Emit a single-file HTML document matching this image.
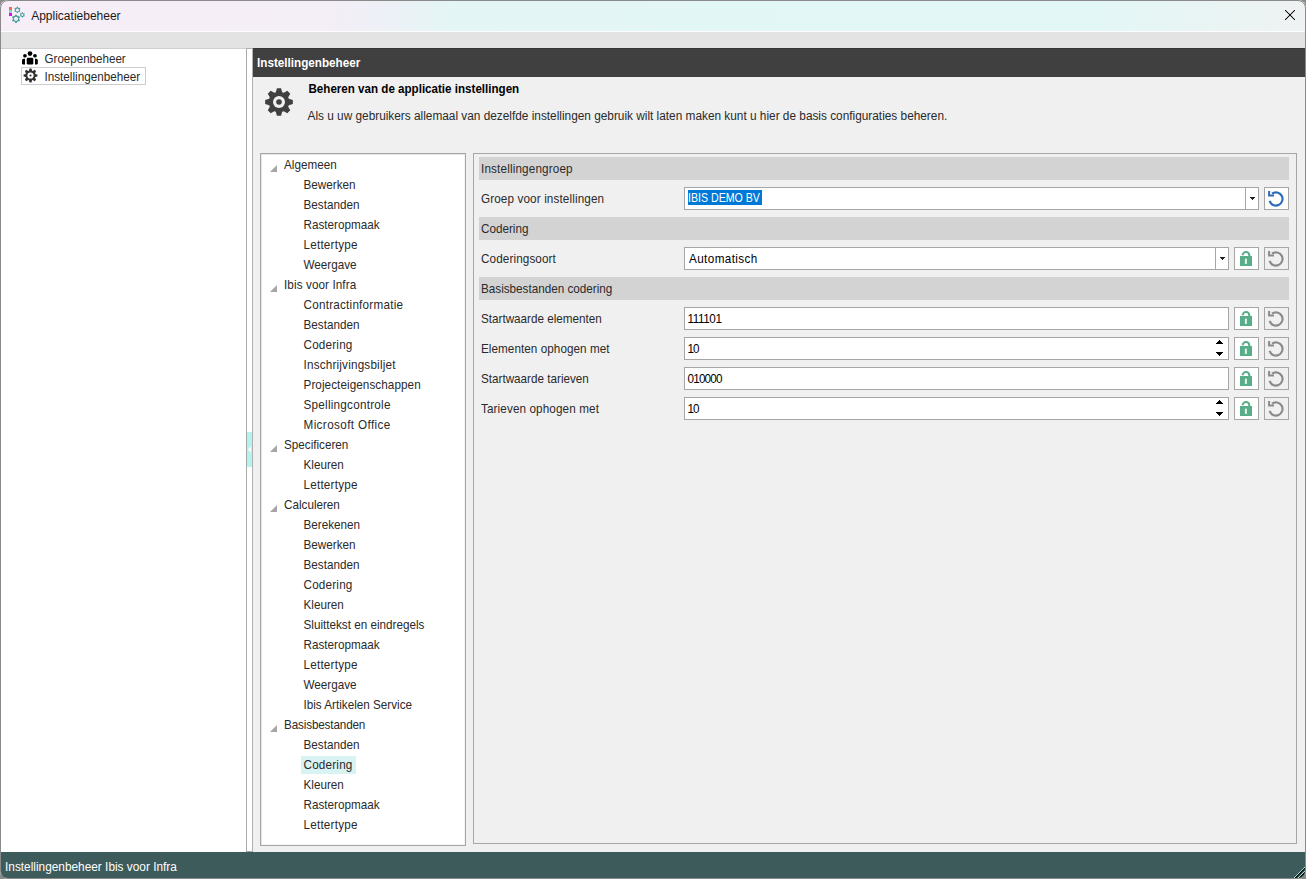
<!DOCTYPE html>
<html><head><meta charset="utf-8"><style>
html,body{margin:0;padding:0;width:1306px;height:879px;overflow:hidden;background:#8a8a8a;}
.win{position:absolute;left:0;top:0;width:1306px;height:879px;overflow:hidden;font-family:"Liberation Sans",sans-serif;}
.t{position:absolute;white-space:nowrap;line-height:16px;font-family:"Liberation Sans",sans-serif;transform-origin:0 12.5px;transform:scaleY(1.07)}
.tri{position:absolute;width:0;height:0;border-left:7px solid transparent;border-bottom:7px solid #a6a6a6;}
.box{position:absolute;background:#fff;border:1px solid #a6a6a6;}
.btn{position:absolute;width:23px;height:21px;border:1px solid #a6a6a6;}
</style></head><body>
<div class="win" style="border-radius:8px;background:#f0f0f0">
<div style="position:absolute;left:1px;top:1px;width:1304px;height:30px;background:linear-gradient(90deg,#f7eef7 0px,#f4eef6 330px,#eef0f7 375px,#e3f6f5 460px,#e2f7f6 1090px,#eff2f2 1304px);"></div>
<div style="position:absolute;left:1px;top:31px;width:1304px;height:1px;background:#fdfdfd;"></div>
<div style="position:absolute;left:1px;top:32px;width:1304px;height:16px;background:#e3e3e3;"></div>
<div style="position:absolute;left:1px;top:48px;width:245px;height:1px;background:#cfcfcf;"></div>
<div style="position:absolute;left:1px;top:49px;width:245px;height:803px;background:#fff;"></div>
<div style="position:absolute;left:246px;top:48px;width:1px;height:804px;background:#a8a8a8;"></div>
<div style="position:absolute;left:247px;top:48px;width:5px;height:804px;background:#fff;"></div>
<div style="position:absolute;left:247px;top:432px;width:5px;height:35px;background:#b4f3ee;"></div>
<div style="position:absolute;left:250px;top:447px;width:1px;height:5px;background:#fff;"></div>
<div style="position:absolute;left:249px;top:448px;width:1px;height:3px;background:#fff;"></div>
<div style="position:absolute;left:248px;top:449px;width:1px;height:1px;background:#fff;"></div>
<div style="position:absolute;left:252px;top:48px;width:1px;height:804px;background:#b0b0b0;"></div>
<div style="position:absolute;left:246px;top:48px;width:7px;height:1px;background:#b0b0b0;"></div>
<div style="position:absolute;left:253px;top:48px;width:1052px;height:1px;background:#353535;"></div>
<div style="position:absolute;left:253px;top:49px;width:1052px;height:28px;background:#404040;"></div>
<div style="position:absolute;left:253px;top:77px;width:1052px;height:775px;background:#f0f0f0;"></div>
<div style="position:absolute;left:260px;top:153px;width:206px;height:693px;background:#fff;box-sizing:border-box;border:1px solid #a6a6a6;box-shadow:inset 1px 1px 0 #e6e6e6,inset -1px -1px 0 #f4f4f4"></div>
<div style="position:absolute;left:473px;top:153px;width:824px;height:691px;background:#f0f0f0;box-sizing:border-box;border:1px solid #a6a6a6"></div>
<div style="position:absolute;left:246px;top:851px;width:7px;height:1px;background:#a8a8a8;"></div>
<div style="position:absolute;left:1px;top:852px;width:1304px;height:26px;background:#3e5b5b;"></div>
<div class="tri" style="left:270px;top:165px"></div>
<div class="t" style="left:284px;top:156.95px;font-size:11.7px;color:#2a2a2a;font-weight:normal;">Algemeen</div>
<div class="t" style="left:303.5px;top:176.95px;font-size:11.7px;color:#2a2a2a;font-weight:normal;">Bewerken</div>
<div class="t" style="left:303.5px;top:196.95px;font-size:11.7px;color:#2a2a2a;font-weight:normal;">Bestanden</div>
<div class="t" style="left:303.5px;top:216.95px;font-size:11.7px;color:#2a2a2a;font-weight:normal;">Rasteropmaak</div>
<div class="t" style="left:303.5px;top:236.95px;font-size:11.7px;color:#2a2a2a;font-weight:normal;letter-spacing:0.22px">Lettertype</div>
<div class="t" style="left:303.5px;top:256.95px;font-size:11.7px;color:#2a2a2a;font-weight:normal;">Weergave</div>
<div class="tri" style="left:270px;top:285px"></div>
<div class="t" style="left:284px;top:276.95px;font-size:11.7px;color:#2a2a2a;font-weight:normal;letter-spacing:0.1px">Ibis voor Infra</div>
<div class="t" style="left:303.5px;top:296.95px;font-size:11.7px;color:#2a2a2a;font-weight:normal;letter-spacing:0.235px">Contractinformatie</div>
<div class="t" style="left:303.5px;top:316.95px;font-size:11.7px;color:#2a2a2a;font-weight:normal;">Bestanden</div>
<div class="t" style="left:303.5px;top:336.95px;font-size:11.7px;color:#2a2a2a;font-weight:normal;letter-spacing:0.2px">Codering</div>
<div class="t" style="left:303.5px;top:356.95px;font-size:11.7px;color:#2a2a2a;font-weight:normal;letter-spacing:0.2px">Inschrijvingsbiljet</div>
<div class="t" style="left:303.5px;top:376.95px;font-size:11.7px;color:#2a2a2a;font-weight:normal;letter-spacing:0.08px">Projecteigenschappen</div>
<div class="t" style="left:303.5px;top:396.95px;font-size:11.7px;color:#2a2a2a;font-weight:normal;letter-spacing:0.25px">Spellingcontrole</div>
<div class="t" style="left:303.5px;top:416.95px;font-size:11.7px;color:#2a2a2a;font-weight:normal;letter-spacing:0.39px">Microsoft Office</div>
<div class="tri" style="left:270px;top:445px"></div>
<div class="t" style="left:284px;top:436.95px;font-size:11.7px;color:#2a2a2a;font-weight:normal;">Specificeren</div>
<div class="t" style="left:303.5px;top:456.95px;font-size:11.7px;color:#2a2a2a;font-weight:normal;">Kleuren</div>
<div class="t" style="left:303.5px;top:476.95px;font-size:11.7px;color:#2a2a2a;font-weight:normal;letter-spacing:0.22px">Lettertype</div>
<div class="tri" style="left:270px;top:505px"></div>
<div class="t" style="left:284px;top:496.95px;font-size:11.7px;color:#2a2a2a;font-weight:normal;">Calculeren</div>
<div class="t" style="left:303.5px;top:516.95px;font-size:11.7px;color:#2a2a2a;font-weight:normal;">Berekenen</div>
<div class="t" style="left:303.5px;top:536.95px;font-size:11.7px;color:#2a2a2a;font-weight:normal;">Bewerken</div>
<div class="t" style="left:303.5px;top:556.95px;font-size:11.7px;color:#2a2a2a;font-weight:normal;">Bestanden</div>
<div class="t" style="left:303.5px;top:576.95px;font-size:11.7px;color:#2a2a2a;font-weight:normal;letter-spacing:0.2px">Codering</div>
<div class="t" style="left:303.5px;top:596.95px;font-size:11.7px;color:#2a2a2a;font-weight:normal;">Kleuren</div>
<div class="t" style="left:303.5px;top:616.95px;font-size:11.7px;color:#2a2a2a;font-weight:normal;">Sluittekst en eindregels</div>
<div class="t" style="left:303.5px;top:636.95px;font-size:11.7px;color:#2a2a2a;font-weight:normal;">Rasteropmaak</div>
<div class="t" style="left:303.5px;top:656.95px;font-size:11.7px;color:#2a2a2a;font-weight:normal;letter-spacing:0.22px">Lettertype</div>
<div class="t" style="left:303.5px;top:676.95px;font-size:11.7px;color:#2a2a2a;font-weight:normal;">Weergave</div>
<div class="t" style="left:303.5px;top:696.95px;font-size:11.7px;color:#2a2a2a;font-weight:normal;">Ibis Artikelen Service</div>
<div class="tri" style="left:270px;top:725px"></div>
<div class="t" style="left:284px;top:716.95px;font-size:11.7px;color:#2a2a2a;font-weight:normal;letter-spacing:-0.14px">Basisbestanden</div>
<div class="t" style="left:303.5px;top:736.95px;font-size:11.7px;color:#2a2a2a;font-weight:normal;">Bestanden</div>
<div style="position:absolute;left:301px;top:756px;width:55px;height:18px;background:#d9f3f3;"></div>
<div class="t" style="left:303.5px;top:756.95px;font-size:11.7px;color:#2a2a2a;font-weight:normal;letter-spacing:0.2px">Codering</div>
<div class="t" style="left:303.5px;top:776.95px;font-size:11.7px;color:#2a2a2a;font-weight:normal;">Kleuren</div>
<div class="t" style="left:303.5px;top:796.95px;font-size:11.7px;color:#2a2a2a;font-weight:normal;">Rasteropmaak</div>
<div class="t" style="left:303.5px;top:816.95px;font-size:11.7px;color:#2a2a2a;font-weight:normal;letter-spacing:0.22px">Lettertype</div>
<div style="position:absolute;left:479px;top:157px;width:810px;height:23px;background:#d3d3d3;"></div>
<div class="t" style="left:481px;top:160.95px;font-size:11.7px;color:#2a2a2a;font-weight:normal;letter-spacing:0.16px">Instellingengroep</div>
<div style="position:absolute;left:479px;top:217px;width:810px;height:23px;background:#d3d3d3;"></div>
<div class="t" style="left:481px;top:220.95px;font-size:11.7px;color:#2a2a2a;font-weight:normal;">Codering</div>
<div style="position:absolute;left:479px;top:277px;width:810px;height:23px;background:#d3d3d3;"></div>
<div class="t" style="left:481px;top:280.95px;font-size:11.7px;color:#2a2a2a;font-weight:normal;">Basisbestanden codering</div>
<div class="t" style="left:481px;top:190.95px;font-size:11.7px;color:#2a2a2a;font-weight:normal;letter-spacing:0.13px">Groep voor instellingen</div>
<div class="t" style="left:481px;top:250.95px;font-size:11.7px;color:#2a2a2a;font-weight:normal;letter-spacing:0.12px">Coderingsoort</div>
<div class="t" style="left:481px;top:310.95px;font-size:11.7px;color:#2a2a2a;font-weight:normal;">Startwaarde elementen</div>
<div class="t" style="left:481px;top:340.95px;font-size:11.7px;color:#2a2a2a;font-weight:normal;letter-spacing:0.06px">Elementen ophogen met</div>
<div class="t" style="left:481px;top:370.95px;font-size:11.7px;color:#2a2a2a;font-weight:normal;">Startwaarde tarieven</div>
<div class="t" style="left:481px;top:400.95px;font-size:11.7px;color:#2a2a2a;font-weight:normal;letter-spacing:0.12px">Tarieven ophogen met</div>
<div class="box" style="left:684px;top:187px;width:573px;height:21px"></div>
<div style="position:absolute;left:1245px;top:187px;width:1px;height:23px;background:#a6a6a6;"></div>
<div style="position:absolute;left:1250px;top:197px;width:5px;height:1px;background:#222;"></div><div style="position:absolute;left:1251px;top:198px;width:3px;height:1px;background:#222;"></div><div style="position:absolute;left:1252px;top:199px;width:1px;height:1px;background:#222;"></div>
<div style="position:absolute;left:688px;top:190px;width:74px;height:15px;background:#0078d7;"></div>
<div class="t" style="left:688.2px;top:189.95px;font-size:11.7px;color:#fff;font-weight:normal;transform:scale(0.907,1.07);transform-origin:0 12.5px">IBIS DEMO BV</div>
<div class="btn" style="left:1264px;top:187px;background:#fff"><svg width="23" height="21" viewBox="0 0 23 21" style="position:absolute;left:0;top:0"><path d="M4.6 12.9 A6.6 6.6 0 1 0 7.0 5.6" fill="none" stroke="#2a6bb8" stroke-width="2.15"/><path d="M3.1 2.9 H5.1 V6.6 H9 V8.5 H3.1 Z" fill="#2a6bb8"/></svg></div>
<div class="box" style="left:684px;top:247px;width:543px;height:21px"></div>
<div style="position:absolute;left:1215px;top:247px;width:1px;height:23px;background:#a6a6a6;"></div>
<div style="position:absolute;left:1220px;top:257px;width:5px;height:1px;background:#222;"></div><div style="position:absolute;left:1221px;top:258px;width:3px;height:1px;background:#222;"></div><div style="position:absolute;left:1222px;top:259px;width:1px;height:1px;background:#222;"></div>
<div class="t" style="left:689px;top:250.95px;font-size:11.7px;color:#000;font-weight:normal;letter-spacing:0.4px">Automatisch</div>
<div class="btn" style="left:1234px;top:247px;background:#fff"><svg width="23" height="21" viewBox="0 0 23 21" style="position:absolute;left:0;top:0"><path d="M7.7 7.2 A3.3 3.3 0 0 1 14.3 7.3 V8.5" fill="none" stroke="#58ae89" stroke-width="2.1"/><rect x="5" y="8" width="12" height="10" fill="#58ae89"/><rect x="9.9" y="10.7" width="2" height="5.2" fill="#e4f2eb"/></svg></div>
<div class="btn" style="left:1264px;top:247px;background:#f0f0f0"><svg width="23" height="21" viewBox="0 0 23 21" style="position:absolute;left:0;top:0"><path d="M4.6 12.9 A6.6 6.6 0 1 0 7.0 5.6" fill="none" stroke="#8a8a8a" stroke-width="2.15"/><path d="M3.1 2.9 H5.1 V6.6 H9 V8.5 H3.1 Z" fill="#8a8a8a"/></svg></div>
<div class="box" style="left:684px;top:307px;width:543px;height:21px"></div>
<div class="t" style="left:687.5px;top:310.95px;font-size:11.7px;color:#000;font-weight:normal;letter-spacing:-0.4px">111101</div>
<div class="btn" style="left:1234px;top:307px;background:#fff"><svg width="23" height="21" viewBox="0 0 23 21" style="position:absolute;left:0;top:0"><path d="M7.7 7.2 A3.3 3.3 0 0 1 14.3 7.3 V8.5" fill="none" stroke="#58ae89" stroke-width="2.1"/><rect x="5" y="8" width="12" height="10" fill="#58ae89"/><rect x="9.9" y="10.7" width="2" height="5.2" fill="#e4f2eb"/></svg></div>
<div class="btn" style="left:1264px;top:307px;background:#f0f0f0"><svg width="23" height="21" viewBox="0 0 23 21" style="position:absolute;left:0;top:0"><path d="M4.6 12.9 A6.6 6.6 0 1 0 7.0 5.6" fill="none" stroke="#8a8a8a" stroke-width="2.15"/><path d="M3.1 2.9 H5.1 V6.6 H9 V8.5 H3.1 Z" fill="#8a8a8a"/></svg></div>
<div class="box" style="left:684px;top:337px;width:543px;height:21px"></div>
<div class="t" style="left:687.5px;top:340.95px;font-size:11.7px;color:#000;font-weight:normal;letter-spacing:-1px">10</div>
<div style="position:absolute;left:1219px;top:340px;width:1px;height:1px;background:#000;"></div><div style="position:absolute;left:1218px;top:341px;width:3px;height:1px;background:#000;"></div><div style="position:absolute;left:1217px;top:342px;width:5px;height:1px;background:#000;"></div><div style="position:absolute;left:1216px;top:343px;width:7px;height:1px;background:#000;"></div>
<div style="position:absolute;left:1216px;top:352px;width:7px;height:1px;background:#000;"></div><div style="position:absolute;left:1217px;top:353px;width:5px;height:1px;background:#000;"></div><div style="position:absolute;left:1218px;top:354px;width:3px;height:1px;background:#000;"></div><div style="position:absolute;left:1219px;top:355px;width:1px;height:1px;background:#000;"></div>
<div class="btn" style="left:1234px;top:337px;background:#fff"><svg width="23" height="21" viewBox="0 0 23 21" style="position:absolute;left:0;top:0"><path d="M7.7 7.2 A3.3 3.3 0 0 1 14.3 7.3 V8.5" fill="none" stroke="#58ae89" stroke-width="2.1"/><rect x="5" y="8" width="12" height="10" fill="#58ae89"/><rect x="9.9" y="10.7" width="2" height="5.2" fill="#e4f2eb"/></svg></div>
<div class="btn" style="left:1264px;top:337px;background:#f0f0f0"><svg width="23" height="21" viewBox="0 0 23 21" style="position:absolute;left:0;top:0"><path d="M4.6 12.9 A6.6 6.6 0 1 0 7.0 5.6" fill="none" stroke="#8a8a8a" stroke-width="2.15"/><path d="M3.1 2.9 H5.1 V6.6 H9 V8.5 H3.1 Z" fill="#8a8a8a"/></svg></div>
<div class="box" style="left:684px;top:367px;width:543px;height:21px"></div>
<div class="t" style="left:687.5px;top:370.95px;font-size:11.7px;color:#000;font-weight:normal;letter-spacing:-0.8px">010000</div>
<div class="btn" style="left:1234px;top:367px;background:#fff"><svg width="23" height="21" viewBox="0 0 23 21" style="position:absolute;left:0;top:0"><path d="M7.7 7.2 A3.3 3.3 0 0 1 14.3 7.3 V8.5" fill="none" stroke="#58ae89" stroke-width="2.1"/><rect x="5" y="8" width="12" height="10" fill="#58ae89"/><rect x="9.9" y="10.7" width="2" height="5.2" fill="#e4f2eb"/></svg></div>
<div class="btn" style="left:1264px;top:367px;background:#f0f0f0"><svg width="23" height="21" viewBox="0 0 23 21" style="position:absolute;left:0;top:0"><path d="M4.6 12.9 A6.6 6.6 0 1 0 7.0 5.6" fill="none" stroke="#8a8a8a" stroke-width="2.15"/><path d="M3.1 2.9 H5.1 V6.6 H9 V8.5 H3.1 Z" fill="#8a8a8a"/></svg></div>
<div class="box" style="left:684px;top:397px;width:543px;height:21px"></div>
<div class="t" style="left:687.5px;top:400.95px;font-size:11.7px;color:#000;font-weight:normal;letter-spacing:-1px">10</div>
<div style="position:absolute;left:1219px;top:400px;width:1px;height:1px;background:#000;"></div><div style="position:absolute;left:1218px;top:401px;width:3px;height:1px;background:#000;"></div><div style="position:absolute;left:1217px;top:402px;width:5px;height:1px;background:#000;"></div><div style="position:absolute;left:1216px;top:403px;width:7px;height:1px;background:#000;"></div>
<div style="position:absolute;left:1216px;top:412px;width:7px;height:1px;background:#000;"></div><div style="position:absolute;left:1217px;top:413px;width:5px;height:1px;background:#000;"></div><div style="position:absolute;left:1218px;top:414px;width:3px;height:1px;background:#000;"></div><div style="position:absolute;left:1219px;top:415px;width:1px;height:1px;background:#000;"></div>
<div class="btn" style="left:1234px;top:397px;background:#fff"><svg width="23" height="21" viewBox="0 0 23 21" style="position:absolute;left:0;top:0"><path d="M7.7 7.2 A3.3 3.3 0 0 1 14.3 7.3 V8.5" fill="none" stroke="#58ae89" stroke-width="2.1"/><rect x="5" y="8" width="12" height="10" fill="#58ae89"/><rect x="9.9" y="10.7" width="2" height="5.2" fill="#e4f2eb"/></svg></div>
<div class="btn" style="left:1264px;top:397px;background:#f0f0f0"><svg width="23" height="21" viewBox="0 0 23 21" style="position:absolute;left:0;top:0"><path d="M4.6 12.9 A6.6 6.6 0 1 0 7.0 5.6" fill="none" stroke="#8a8a8a" stroke-width="2.15"/><path d="M3.1 2.9 H5.1 V6.6 H9 V8.5 H3.1 Z" fill="#8a8a8a"/></svg></div>
<div class="t" style="left:257px;top:54.95px;font-size:11.7px;color:#fff;font-weight:bold;">Instellingenbeheer</div>
<div class="t" style="left:308.5px;top:80.98px;font-size:11.6px;color:#000;font-weight:bold;">Beheren van de applicatie instellingen</div>
<div class="t" style="left:307.5px;top:107.90px;font-size:11.84px;color:#2a2a2a;font-weight:normal;">Als u uw gebruikers allemaal van dezelfde instellingen gebruik wilt laten maken kunt u hier de basis configuraties beheren.</div>
<svg style="position:absolute;left:265px;top:88px" width="28" height="28" viewBox="0 0 28 28"><path d="M10.82 4.20 L11.92 0.16 L16.08 0.16 L17.18 4.20 L18.68 4.82 L22.32 2.74 L25.26 5.68 L23.18 9.32 L23.80 10.82 L27.84 11.92 L27.84 16.08 L23.80 17.18 L23.18 18.68 L25.26 22.32 L22.32 25.26 L18.68 23.18 L17.18 23.80 L16.08 27.84 L11.92 27.84 L10.82 23.80 L9.32 23.18 L5.68 25.26 L2.74 22.32 L4.82 18.68 L4.20 17.18 L0.16 16.08 L0.16 11.92 L4.20 10.82 L4.82 9.32 L2.74 5.68 L5.68 2.74 L9.32 4.82Z" fill="#404040"/><circle cx="14" cy="14" r="6" fill="#f0f0f0"/><circle cx="14" cy="14" r="2.8" fill="#404040"/></svg>
<div style="position:absolute;left:21px;top:67px;width:125px;height:18px;background:transparent;box-sizing:border-box;border:1px solid #cdcdcd"></div>
<svg style="position:absolute;left:22.5px;top:68.4px" width="15" height="15" viewBox="0 0 15 15"><path d="M5.92 2.65 L6.46 0.58 L8.54 0.58 L9.08 2.65 L9.82 2.96 L11.66 1.87 L13.13 3.34 L12.04 5.18 L12.35 5.92 L14.42 6.46 L14.42 8.54 L12.35 9.08 L12.04 9.82 L13.13 11.66 L11.66 13.13 L9.82 12.04 L9.08 12.35 L8.54 14.42 L6.46 14.42 L5.92 12.35 L5.18 12.04 L3.34 13.13 L1.87 11.66 L2.96 9.82 L2.65 9.08 L0.58 8.54 L0.58 6.46 L2.65 5.92 L2.96 5.18 L1.87 3.34 L3.34 1.87 L5.18 2.96Z" fill="#333"/><circle cx="7.5" cy="7.5" r="3.1" fill="#fff"/><circle cx="7.5" cy="7.5" r="1.1" fill="#333"/></svg>
<svg style="position:absolute;left:22px;top:51px" width="16" height="14" viewBox="0 0 16 14"><circle cx="8" cy="2.6" r="2.35" fill="#000"/><circle cx="2.95" cy="4.75" r="1.85" fill="#000"/><circle cx="12.95" cy="4.75" r="1.85" fill="#000"/><rect x="4.75" y="6.8" width="6.55" height="6.8" rx="1.4" fill="#000"/><path d="M3 7.8 V13.6 H1.4 Q0 13.6 0 12.2 V9.3 Q0 7.8 1.5 7.8 Z" fill="#000"/><path d="M13 7.8 V13.6 H14.4 Q15.8 13.6 15.8 12.2 V9.3 Q15.8 7.8 14.3 7.8 Z" fill="#000"/></svg>
<div class="t" style="left:44.5px;top:50.58px;font-size:11.6px;color:#2a2a2a;font-weight:normal;">Groepenbeheer</div>
<div class="t" style="left:44.5px;top:68.75px;font-size:11.7px;color:#2a2a2a;font-weight:normal;">Instellingenbeheer</div>
<div class="t" style="left:5px;top:859.39px;font-size:11.85px;color:#fff;font-weight:normal;">Instellingenbeheer Ibis voor Infra</div>
<div class="t" style="left:31.2px;top:8.44px;font-size:12px;color:#1a1a1a;font-weight:normal;">Applicatiebeheer</div>
<div style="position:absolute;left:9px;top:7px;width:3px;height:3px;background:#ee6c58;"></div>
<div style="position:absolute;left:9px;top:10px;width:3px;height:3px;background:#7ad8cc;"></div>
<div style="position:absolute;left:9px;top:13px;width:3px;height:3px;background:#de10e8;"></div>
<svg style="position:absolute;left:0;top:0" width="30" height="30" viewBox="0 0 30 30"><path d="M16.52 7.67 L16.83 6.75 L17.97 6.75 L18.28 7.67 L18.89 8.02 L19.84 7.83 L20.41 8.82 L19.77 9.55 L19.77 10.25 L20.41 10.98 L19.84 11.97 L18.89 11.78 L18.28 12.13 L17.97 13.05 L16.83 13.05 L16.52 12.13 L15.91 11.78 L14.96 11.97 L14.39 10.98 L15.03 10.25 L15.03 9.55 L14.39 8.82 L14.96 7.83 L15.91 8.02Z" fill="#4a9e9c"/><circle cx="17.4" cy="9.9" r="1.5" fill="#f3eef6"/><path d="M21.63 13.04 L21.89 12.29 L22.81 12.29 L23.07 13.04 L23.56 13.32 L24.34 13.17 L24.80 13.97 L24.28 14.57 L24.28 15.13 L24.80 15.73 L24.34 16.53 L23.56 16.38 L23.07 16.66 L22.81 17.41 L21.89 17.41 L21.63 16.66 L21.14 16.38 L20.36 16.53 L19.90 15.73 L20.42 15.13 L20.42 14.57 L19.90 13.97 L20.36 13.17 L21.14 13.32Z" fill="#4a9e9c"/><circle cx="22.35" cy="14.85" r="1.1" fill="#f3eef6"/><path d="M14.82 15.82 L15.26 14.67 L16.74 14.67 L17.18 15.82 L17.99 16.29 L19.21 16.09 L19.95 17.38 L19.17 18.33 L19.17 19.27 L19.95 20.22 L19.21 21.51 L17.99 21.31 L17.18 21.78 L16.74 22.93 L15.26 22.93 L14.82 21.78 L14.01 21.31 L12.79 21.51 L12.05 20.22 L12.83 19.27 L12.83 18.33 L12.05 17.38 L12.79 16.09 L14.01 16.29Z" fill="#4a9e9c"/><circle cx="16" cy="18.8" r="2.1" fill="#f3eef6"/></svg>
<div style="position:absolute;left:1286px;top:10px;width:1px;height:1px;background:#c4c6c6;"></div><div style="position:absolute;left:1285px;top:11px;width:1px;height:1px;background:#c4c6c6;"></div><div style="position:absolute;left:1293px;top:10px;width:1px;height:1px;background:#c4c6c6;"></div><div style="position:absolute;left:1294px;top:11px;width:1px;height:1px;background:#c4c6c6;"></div><div style="position:absolute;left:1287px;top:11px;width:1px;height:1px;background:#c4c6c6;"></div><div style="position:absolute;left:1286px;top:12px;width:1px;height:1px;background:#c4c6c6;"></div><div style="position:absolute;left:1292px;top:11px;width:1px;height:1px;background:#c4c6c6;"></div><div style="position:absolute;left:1293px;top:12px;width:1px;height:1px;background:#c4c6c6;"></div><div style="position:absolute;left:1288px;top:12px;width:1px;height:1px;background:#c4c6c6;"></div><div style="position:absolute;left:1287px;top:13px;width:1px;height:1px;background:#c4c6c6;"></div><div style="position:absolute;left:1291px;top:12px;width:1px;height:1px;background:#c4c6c6;"></div><div style="position:absolute;left:1292px;top:13px;width:1px;height:1px;background:#c4c6c6;"></div><div style="position:absolute;left:1289px;top:13px;width:1px;height:1px;background:#c4c6c6;"></div><div style="position:absolute;left:1288px;top:14px;width:1px;height:1px;background:#c4c6c6;"></div><div style="position:absolute;left:1290px;top:13px;width:1px;height:1px;background:#c4c6c6;"></div><div style="position:absolute;left:1291px;top:14px;width:1px;height:1px;background:#c4c6c6;"></div><div style="position:absolute;left:1290px;top:14px;width:1px;height:1px;background:#c4c6c6;"></div><div style="position:absolute;left:1289px;top:15px;width:1px;height:1px;background:#c4c6c6;"></div><div style="position:absolute;left:1289px;top:14px;width:1px;height:1px;background:#c4c6c6;"></div><div style="position:absolute;left:1290px;top:15px;width:1px;height:1px;background:#c4c6c6;"></div><div style="position:absolute;left:1291px;top:15px;width:1px;height:1px;background:#c4c6c6;"></div><div style="position:absolute;left:1290px;top:16px;width:1px;height:1px;background:#c4c6c6;"></div><div style="position:absolute;left:1288px;top:15px;width:1px;height:1px;background:#c4c6c6;"></div><div style="position:absolute;left:1289px;top:16px;width:1px;height:1px;background:#c4c6c6;"></div><div style="position:absolute;left:1292px;top:16px;width:1px;height:1px;background:#c4c6c6;"></div><div style="position:absolute;left:1291px;top:17px;width:1px;height:1px;background:#c4c6c6;"></div><div style="position:absolute;left:1287px;top:16px;width:1px;height:1px;background:#c4c6c6;"></div><div style="position:absolute;left:1288px;top:17px;width:1px;height:1px;background:#c4c6c6;"></div><div style="position:absolute;left:1293px;top:17px;width:1px;height:1px;background:#c4c6c6;"></div><div style="position:absolute;left:1292px;top:18px;width:1px;height:1px;background:#c4c6c6;"></div><div style="position:absolute;left:1286px;top:17px;width:1px;height:1px;background:#c4c6c6;"></div><div style="position:absolute;left:1287px;top:18px;width:1px;height:1px;background:#c4c6c6;"></div><div style="position:absolute;left:1294px;top:18px;width:1px;height:1px;background:#c4c6c6;"></div><div style="position:absolute;left:1293px;top:19px;width:1px;height:1px;background:#c4c6c6;"></div><div style="position:absolute;left:1285px;top:18px;width:1px;height:1px;background:#c4c6c6;"></div><div style="position:absolute;left:1286px;top:19px;width:1px;height:1px;background:#c4c6c6;"></div><div style="position:absolute;left:1285px;top:10px;width:1px;height:1px;background:#111;"></div><div style="position:absolute;left:1294px;top:10px;width:1px;height:1px;background:#111;"></div><div style="position:absolute;left:1286px;top:11px;width:1px;height:1px;background:#111;"></div><div style="position:absolute;left:1293px;top:11px;width:1px;height:1px;background:#111;"></div><div style="position:absolute;left:1287px;top:12px;width:1px;height:1px;background:#111;"></div><div style="position:absolute;left:1292px;top:12px;width:1px;height:1px;background:#111;"></div><div style="position:absolute;left:1288px;top:13px;width:1px;height:1px;background:#111;"></div><div style="position:absolute;left:1291px;top:13px;width:1px;height:1px;background:#111;"></div><div style="position:absolute;left:1289px;top:14px;width:1px;height:1px;background:#111;"></div><div style="position:absolute;left:1290px;top:14px;width:1px;height:1px;background:#111;"></div><div style="position:absolute;left:1290px;top:15px;width:1px;height:1px;background:#111;"></div><div style="position:absolute;left:1289px;top:15px;width:1px;height:1px;background:#111;"></div><div style="position:absolute;left:1291px;top:16px;width:1px;height:1px;background:#111;"></div><div style="position:absolute;left:1288px;top:16px;width:1px;height:1px;background:#111;"></div><div style="position:absolute;left:1292px;top:17px;width:1px;height:1px;background:#111;"></div><div style="position:absolute;left:1287px;top:17px;width:1px;height:1px;background:#111;"></div><div style="position:absolute;left:1293px;top:18px;width:1px;height:1px;background:#111;"></div><div style="position:absolute;left:1286px;top:18px;width:1px;height:1px;background:#111;"></div><div style="position:absolute;left:1294px;top:19px;width:1px;height:1px;background:#111;"></div><div style="position:absolute;left:1285px;top:19px;width:1px;height:1px;background:#111;"></div>
<div style="position:absolute;left:1294px;top:877px;width:1px;height:1px;background:#a6e0dc;"></div><div style="position:absolute;left:1295px;top:876px;width:1px;height:1px;background:#a6e0dc;"></div><div style="position:absolute;left:1296px;top:875px;width:1px;height:1px;background:#a6e0dc;"></div><div style="position:absolute;left:1297px;top:874px;width:1px;height:1px;background:#a6e0dc;"></div><div style="position:absolute;left:1298px;top:873px;width:1px;height:1px;background:#a6e0dc;"></div><div style="position:absolute;left:1299px;top:872px;width:1px;height:1px;background:#a6e0dc;"></div><div style="position:absolute;left:1300px;top:871px;width:1px;height:1px;background:#a6e0dc;"></div><div style="position:absolute;left:1301px;top:870px;width:1px;height:1px;background:#a6e0dc;"></div><div style="position:absolute;left:1302px;top:869px;width:1px;height:1px;background:#a6e0dc;"></div><div style="position:absolute;left:1303px;top:868px;width:1px;height:1px;background:#a6e0dc;"></div><div style="position:absolute;left:1304px;top:867px;width:1px;height:1px;background:#a6e0dc;"></div><div style="position:absolute;left:1295px;top:877px;width:1px;height:1px;background:#0a0a0a;"></div><div style="position:absolute;left:1296px;top:876px;width:1px;height:1px;background:#0a0a0a;"></div><div style="position:absolute;left:1297px;top:875px;width:1px;height:1px;background:#0a0a0a;"></div><div style="position:absolute;left:1298px;top:874px;width:1px;height:1px;background:#0a0a0a;"></div><div style="position:absolute;left:1299px;top:873px;width:1px;height:1px;background:#0a0a0a;"></div><div style="position:absolute;left:1300px;top:872px;width:1px;height:1px;background:#0a0a0a;"></div><div style="position:absolute;left:1301px;top:871px;width:1px;height:1px;background:#0a0a0a;"></div><div style="position:absolute;left:1302px;top:870px;width:1px;height:1px;background:#0a0a0a;"></div><div style="position:absolute;left:1303px;top:869px;width:1px;height:1px;background:#0a0a0a;"></div><div style="position:absolute;left:1304px;top:868px;width:1px;height:1px;background:#0a0a0a;"></div><div style="position:absolute;left:1298px;top:877px;width:1px;height:1px;background:#a6e0dc;"></div><div style="position:absolute;left:1299px;top:876px;width:1px;height:1px;background:#a6e0dc;"></div><div style="position:absolute;left:1300px;top:875px;width:1px;height:1px;background:#a6e0dc;"></div><div style="position:absolute;left:1301px;top:874px;width:1px;height:1px;background:#a6e0dc;"></div><div style="position:absolute;left:1302px;top:873px;width:1px;height:1px;background:#a6e0dc;"></div><div style="position:absolute;left:1303px;top:872px;width:1px;height:1px;background:#a6e0dc;"></div><div style="position:absolute;left:1304px;top:871px;width:1px;height:1px;background:#a6e0dc;"></div><div style="position:absolute;left:1299px;top:877px;width:1px;height:1px;background:#0a0a0a;"></div><div style="position:absolute;left:1300px;top:876px;width:1px;height:1px;background:#0a0a0a;"></div><div style="position:absolute;left:1301px;top:875px;width:1px;height:1px;background:#0a0a0a;"></div><div style="position:absolute;left:1302px;top:874px;width:1px;height:1px;background:#0a0a0a;"></div><div style="position:absolute;left:1303px;top:873px;width:1px;height:1px;background:#0a0a0a;"></div><div style="position:absolute;left:1304px;top:872px;width:1px;height:1px;background:#0a0a0a;"></div><div style="position:absolute;left:1296px;top:877px;width:1px;height:1px;background:#1a2a2a;"></div><div style="position:absolute;left:1297px;top:876px;width:1px;height:1px;background:#1a2a2a;"></div><div style="position:absolute;left:1298px;top:875px;width:1px;height:1px;background:#1a2a2a;"></div><div style="position:absolute;left:1299px;top:874px;width:1px;height:1px;background:#1a2a2a;"></div><div style="position:absolute;left:1300px;top:873px;width:1px;height:1px;background:#1a2a2a;"></div><div style="position:absolute;left:1301px;top:872px;width:1px;height:1px;background:#1a2a2a;"></div><div style="position:absolute;left:1302px;top:871px;width:1px;height:1px;background:#1a2a2a;"></div><div style="position:absolute;left:1303px;top:870px;width:1px;height:1px;background:#1a2a2a;"></div><div style="position:absolute;left:1304px;top:869px;width:1px;height:1px;background:#1a2a2a;"></div><div style="position:absolute;left:1300px;top:877px;width:1px;height:1px;background:#1a2a2a;"></div><div style="position:absolute;left:1301px;top:876px;width:1px;height:1px;background:#1a2a2a;"></div><div style="position:absolute;left:1302px;top:875px;width:1px;height:1px;background:#1a2a2a;"></div><div style="position:absolute;left:1303px;top:874px;width:1px;height:1px;background:#1a2a2a;"></div><div style="position:absolute;left:1304px;top:873px;width:1px;height:1px;background:#1a2a2a;"></div>
</div>
<div style="position:absolute;left:0;top:0;width:1304px;height:877px;border:1px solid #8a8a8a;border-radius:8px;pointer-events:none"></div>
</body></html>
